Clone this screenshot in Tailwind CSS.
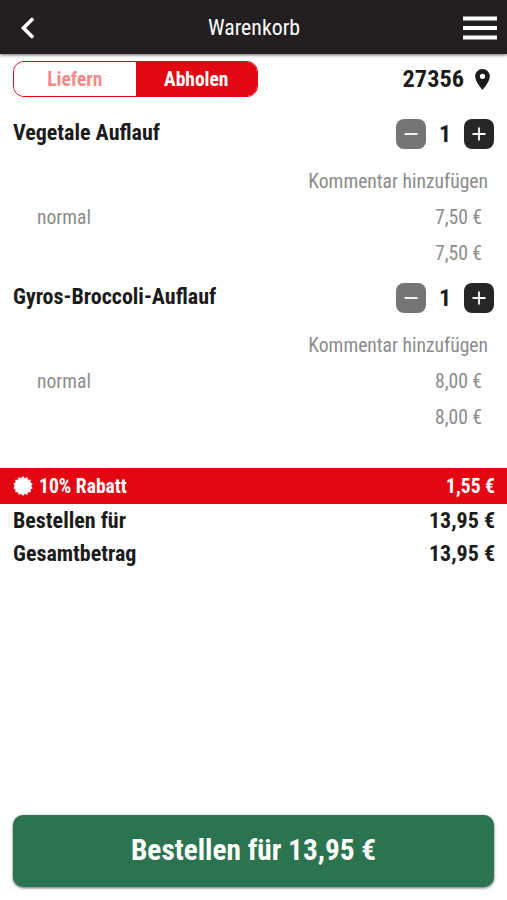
<!DOCTYPE html>
<html lang="de">
<head>
<meta charset="UTF-8">
<meta name="viewport" content="width=device-width, initial-scale=1.0">
<title>Warenkorb</title>
<script src="https://cdn.jsdelivr.net/npm/@tailwindcss/browser@4"></script>
</head>
<body class="bg-white font-['Roboto_Condensed','Roboto',sans-serif] font-stretch-condensed text-[#1b1b1b]">
<div class="flex h-[900px] w-[507px] flex-col overflow-hidden">
<header class="flex h-[54px] shrink-0 items-center justify-between bg-[#231f20] pr-[10px] pl-5 text-white shadow-[0_1px_3px_rgba(0,0,0,0.6)]">
<button class="w-[25px]" aria-label="Zurück">
<svg class="mt-[2px] h-[22px] w-[15px]" viewBox="0 0 15 22" fill="none" stroke="currentColor" stroke-width="3.600" stroke-linecap="round"><path d="M12 2.500 3.500 11l8.500 8.500"/></svg>
</button>
<h1 class="pt-[2px] text-[21.8px]">Warenkorb</h1>
<button aria-label="Menü">
<svg class="mt-[2px] h-6 w-[34px]" viewBox="0 0 34 24" fill="currentColor"><path d="M0 .500h34v4H0zM0 10h34v4H0zM0 19.500h34v4H0z"/></svg>
</button>
</header>

<main class="flex grow flex-col">
<div class="mt-[7px] flex h-9 items-center justify-between pr-[17px] pl-[13px] font-bold">
<div class="flex h-9 w-[245px] overflow-hidden rounded-[11px] border border-[#e30613] text-[19.5px]">
<button class="w-1/2 bg-white pt-[2px] text-[#f28b88]">Liefern</button>
<button class="w-1/2 bg-[#e30613] pt-[2px] text-white">Abholen</button>
</div>
<div class="flex items-center gap-[11px] text-[24.3px]">
<span>27356</span>
<svg class="h-[21px] w-[15px]" viewBox="5 2 14 20" fill="currentColor"><path d="M12 2C8.130 2 5 5.130 5 9c0 5.250 7 13 7 13s7-7.750 7-13c0-3.870-3.130-7-7-7zm0 9.500a2.500 2.500 0 1 1 0-5 2.500 2.500 0 0 1 0 5z"/></svg>
</div>
</div>

<section class="mt-[19px] h-[164px]">
<div class="flex h-[36px] items-center justify-between pr-[13px] pl-[13px] font-bold">
<h2 class="pb-1 text-[22px]">Vegetale Auflauf</h2>
<div class="flex items-center text-2xl">
<button class="flex size-[30px] items-center justify-center rounded-lg bg-[#757575] text-white" aria-label="Weniger"><svg class="size-[14px]" viewBox="0 0 14 14" fill="none" stroke="currentColor" stroke-width="1.800"><path d="M.500 7h13"/></svg></button>
<span class="w-[38px] text-center">1</span>
<button class="flex size-[30px] items-center justify-center rounded-lg bg-[#262626] text-white" aria-label="Mehr"><svg class="size-[14px]" viewBox="0 0 14 14" fill="none" stroke="currentColor" stroke-width="1.800"><path d="M.500 7h13M7 .500v13"/></svg></button>
</div>
</div>
<div class="pt-3 text-[19.6px] text-[#8b8b8b]">
<p class="h-9 pr-[19px] text-right leading-9">Kommentar hinzufügen</p>
<div class="flex h-9 justify-between pr-[25px] pl-[37px] leading-9"><span>normal</span><span>7,50 €</span></div>
<p class="h-9 pr-[25px] text-right leading-9">7,50 €</p>
</div>
</section>

<section class="h-[164px]">
<div class="flex h-[36px] items-center justify-between pr-[13px] pl-[13px] font-bold">
<h2 class="pb-1 text-[22px]">Gyros-Broccoli-Auflauf</h2>
<div class="flex items-center text-2xl">
<button class="flex size-[30px] items-center justify-center rounded-lg bg-[#757575] text-white" aria-label="Weniger"><svg class="size-[14px]" viewBox="0 0 14 14" fill="none" stroke="currentColor" stroke-width="1.800"><path d="M.500 7h13"/></svg></button>
<span class="w-[38px] text-center">1</span>
<button class="flex size-[30px] items-center justify-center rounded-lg bg-[#262626] text-white" aria-label="Mehr"><svg class="size-[14px]" viewBox="0 0 14 14" fill="none" stroke="currentColor" stroke-width="1.800"><path d="M.500 7h13M7 .500v13"/></svg></button>
</div>
</div>
<div class="pt-3 text-[19.6px] text-[#8b8b8b]">
<p class="h-9 pr-[19px] text-right leading-9">Kommentar hinzufügen</p>
<div class="flex h-9 justify-between pr-[25px] pl-[37px] leading-9"><span>normal</span><span>8,00 €</span></div>
<p class="h-9 pr-[25px] text-right leading-9">8,00 €</p>
</div>
</section>

<div class="mt-[24px] flex h-9 shrink-0 items-center justify-between bg-[#e30613] pr-3 pl-[13px] text-[19.6px] font-bold text-white">
<span class="flex items-center gap-[6px]">
<svg class="size-5" viewBox="-10 -10 20 20" fill="currentColor"><path d="M0-10 1.900-7.800 4.300-9 5-6.300 7.800-6.200 7.500-3.500 9.700-2.200 8.200 0 9.700 2.200 7.500 3.500 7.800 6.200 5 6.300 4.300 9 1.900 7.800 0 10-1.900 7.800-4.300 9-5 6.300-7.800 6.200-7.500 3.500-9.700 2.200-8.200 0-9.700-2.200-7.500-3.500-7.800-6.200-5-6.300-4.300-9-1.900-7.800z"/></svg>
<span class="pt-[2px]">10% Rabatt</span>
</span>
<span class="pt-[2px]">1,55 €</span>
</div>
<div class="flex h-[33px] items-center justify-between pr-3 pl-[13px] text-[22px] font-bold"><span>Bestellen für</span><span>13,95 €</span></div>
<div class="flex h-[33px] items-center justify-between pr-3 pl-[13px] text-[22px] font-bold"><span>Gesamtbetrag</span><span>13,95 €</span></div>

<button class="mx-[13px] mt-auto mb-[13px] h-[72px] rounded-[10px] bg-[#2c7350] text-[29.3px] font-bold text-white shadow-[0_1px_3px_rgba(0,0,0,0.6)]">Bestellen für 13,95 €</button>
</main>
</div>
</body>
</html>
